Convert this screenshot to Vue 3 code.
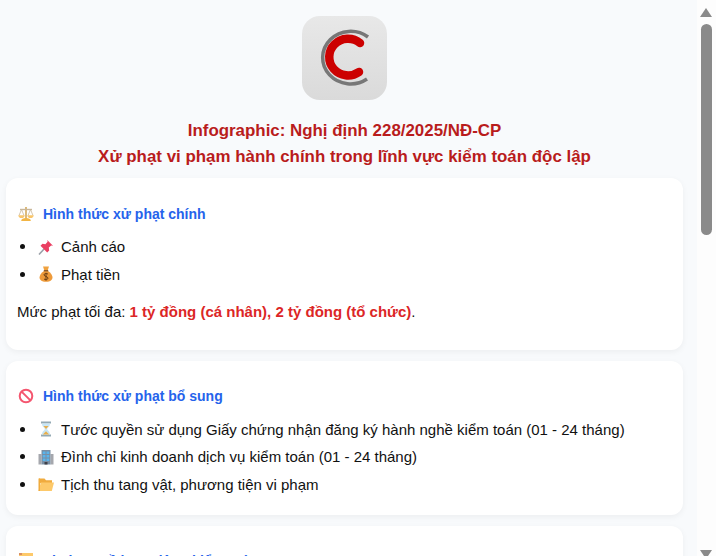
<script setup>
const sections = [
  {
    title: 'Hình thức xử phạt chính', icon: 'scale',
    items: [{ icon: 'pin', text: 'Cảnh cáo' }, { icon: 'bag', text: 'Phạt tiền' }],
    note: true,
  },
  {
    title: 'Hình thức xử phạt bổ sung', icon: 'ban',
    items: [
      { icon: 'glass', text: 'Tước quyền sử dụng Giấy chứng nhận đăng ký hành nghề kiểm toán (01 - 24 tháng)' },
      { icon: 'office', text: 'Đình chỉ kinh doanh dịch vụ kiểm toán (01 - 24 tháng)' },
      { icon: 'folder', text: 'Tịch thu tang vật, phương tiện vi phạm' },
    ],
  },
  {
    title: 'Vi phạm về hoạt động kiểm toán', icon: 'folder',
    items: [{ icon: 'pin', text: 'Buộc nộp lại số lợi bất hợp pháp' }],
  },
]
</script>

<template>
  <div class="shell">
    <main class="page">
      <div class="logo">
        <svg width="85" height="84" viewBox="0 0 85 84">
          <path d="M66 21 A28 26.3 0 1 0 65 63" fill="none" stroke="#777" stroke-width="3.500"/>
          <path d="M58 27 A18.800 18.300 0 1 0 57 56" fill="none" stroke="#cc0000" stroke-width="8.500" stroke-linecap="round"/>
        </svg>
      </div>
      <h1 class="title">Infographic: Nghị định 228/2025/NĐ-CP<br>Xử phạt vi phạm hành chính trong lĩnh vực kiểm toán độc lập</h1>

      <section v-for="s in sections" :key="s.title" class="card">
        <h2 class="heading">
          <svg class="emoji" viewBox="0 0 16 16" v-if="s.icon === 'scale'">
            <path d="M8 1v12" stroke="#d9b36c" stroke-width="1.800"/>
            <path d="M2 3.500h12" stroke="#c9b79a" stroke-width="1.400"/>
            <path d="M1 9.500l2.500-6 2.500 6M10 9.500l2.500-6 2.500 6" fill="none" stroke="#c9b79a" stroke-width=".8"/>
            <path d="M.4 9.200h6.200a3.100 2.800 0 0 1-6.200 0zM9.400 9.200h6.200a3.100 2.800 0 0 1-6.200 0z" fill="#f8c56b"/>
            <path d="M3.200 15c0-2 2.200-2.900 4.800-2.900s4.800.9 4.800 2.900z" fill="#f2b544"/>
          </svg>
          <svg class="emoji" viewBox="0 0 16 16" v-else-if="s.icon === 'ban'">
            <circle cx="8" cy="8" r="6.300" fill="#fff" stroke="#f4566f" stroke-width="2"/>
            <path d="M3.600 3.600l8.800 8.800" stroke="#f4566f" stroke-width="2"/>
          </svg>
          <svg class="emoji" viewBox="0 0 16 16" v-else>
            <path d="M1 0h14v14H1z" fill="#fdc96a"/>
            <path d="M1 0h3v2H1z" fill="#d98f62"/>
          </svg>
          <span>{{ s.title }}</span>
        </h2>
        <ul class="list">
          <li v-for="it in s.items" :key="it.text">
            <svg class="emoji" viewBox="0 0 16 16" v-if="it.icon === 'pin'">
              <path d="M1 15.500l5.500-6" stroke="#9aa0a8" stroke-width="1.600"/>
              <path d="M2.500 6.800L9.200 13.500l2-2-.4-2.900 2.400-2.200 1.800.4L9.200 1l.4 1.800-2.200 2.400-2.900-.4z" fill="#ea3f62"/>
            </svg>
            <svg class="emoji" viewBox="0 0 16 16" v-else-if="it.icon === 'bag'">
              <path d="M5 .5h6L9.800 4.200H6.200z" fill="#f0a23f"/>
              <path d="M6 5h4c3 2 4.500 4.400 4.500 6.500S12.500 15.800 8 15.800 1.500 13.600 1.500 11.500 3 7 6 5z" fill="#ee9a3a"/>
              <path d="M5.800 4h4.400v1.400H5.800z" fill="#8a5a2b"/>
              <path d="M6 13c1.200 1 4 .8 4-.9S6 10.500 6 8.900s2.800-1.800 4-.8M8 6.800v7.800" stroke="#6a3d12" stroke-width="1" fill="none"/>
            </svg>
            <svg class="emoji" viewBox="0 0 16 16" v-else-if="it.icon === 'glass'">
              <path d="M3 .5h10v2H3zM3 13.500h10v2H3z" fill="#93a9b4"/>
              <path d="M4 2.500h8c0 3.500-2.800 4-2.800 5.500s2.800 2 2.800 5.500H4C4 10 6.800 9.500 6.800 8S4 6 4 2.500z" fill="#c8e6f5"/>
              <path d="M4.800 13.500h6.400L8 10.300zM5.500 5h5L8 8z" fill="#e9ae4a"/>
            </svg>
            <svg class="emoji" viewBox="0 0 16 16" v-else-if="it.icon === 'office'">
              <path d="M.5 5h3v10.500h-3zM12.500 5h3v10.500h-3z" fill="#a5a7ad"/>
              <path d="M3.500 1h9v14.500h-9z" fill="#7a8ea3"/>
              <path d="M4.700 2.500h2.800v2.500H4.700zM8.500 2.500h2.800v2.500H8.500zM4.700 6h2.800v2.500H4.700zM8.500 6h2.800v2.500H8.500zM4.700 9.500h2.800v2.500H4.700zM8.500 9.500h2.800v2.500H8.500z" fill="#59b4ec"/>
              <path d="M6.500 13h3v2.500h-3z" fill="#3f3f46"/>
            </svg>
            <svg class="emoji" viewBox="0 0 16 16" v-else>
              <path d="M1 2.500h5.500L8 4.300h6v3H1z" fill="#f0ab3e"/>
              <path d="M.5 15L2.800 6.500H16L13.800 15z" fill="#fdc96a"/>
              <path d="M.5 2.500h1.500V15H.5z" fill="#f0ab3e"/>
            </svg>
            <span>{{ it.text }}</span>
          </li>
        </ul>
        <p v-if="s.note" class="note">Mức phạt tối đa: <strong>1 tỷ đồng (cá nhân), 2 tỷ đồng (tổ chức)</strong>.</p>
      </section>
    </main>
    <aside class="scrollbar">
      <div class="arrow"></div>
      <div class="thumb"></div>
      <div class="arrow down"></div>
    </aside>
  </div>
</template>

<style>
html, body { margin: 0; overflow: hidden; }
</style>

<style scoped>
.shell {
  display: flex;
  height: 556px;
  overflow: hidden;
  background: #f8fafc;
  font-family: "Liberation Sans", Arial, sans-serif;
  color: #111;
}
.page {
  width: 677px;
  padding: 0 14px 0 6px;
  flex: none;
}
.logo {
  width: 85px;
  height: 84px;
  margin: 16px auto 0;
  border-radius: 18px;
  background: linear-gradient(#e8e8e8, #dadada);
}
.logo svg { display: block; }
.title {
  margin: 18px 0 8px;
  text-align: center;
  font-size: 16.900px;
  line-height: 26px;
  font-weight: 700;
  color: #b91c1c;
}
.card {
  background: #fff;
  border-radius: 12px;
  padding: 10px 11px 10px;
  margin-bottom: 11px;
  box-shadow: 0 2px 6px rgba(0, 0, 0, .05);
}
.heading {
  display: flex;
  align-items: center;
  gap: 9px;
  margin: 15.600px 0 9.300px 1px;
  font-size: 14px;
  line-height: 20px;
  font-weight: 700;
  color: #2563eb;
}
.list {
  margin: 0 0 6.500px;
  padding: 0;
  list-style: none;
  font-size: 15px;
}
.list li {
  display: flex;
  align-items: center;
  height: 27.600px;
}
.list li::before {
  content: "";
  flex: none;
  width: 5px;
  height: 5px;
  margin: 0 13px 0 3px;
  border-radius: 50%;
  background: #111;
}
.emoji {
  width: 16px;
  height: 16px;
  flex: none;
}
.list .emoji {
  margin-right: 7px;
}
.note {
  margin: 13.500px 0 18px;
  font-size: 15px;
  line-height: 20px;
}
.note strong { color: #dc2626; }
.scrollbar {
  width: 16px;
  padding: 8px 0 0 3px;
  flex: none;
  display: flex;
  flex-direction: column;
  background: #fdfdfd;
}
.arrow {
  width: 0;
  height: 0;
  flex: none;
  border-left: 6px solid transparent;
  border-right: 6px solid transparent;
  border-bottom: 9px solid #8a8a8a;
}
.arrow.down {
  margin-top: auto;
  margin-bottom: -3px;
  border-bottom: 0;
  border-top: 9px solid #8a8a8a;
}
.thumb {
  width: 11px;
  height: 211px;
  margin: 7px 0 0 1px;
  flex: none;
  border-radius: 6px;
  background: #8a8a8a;
}
</style>
